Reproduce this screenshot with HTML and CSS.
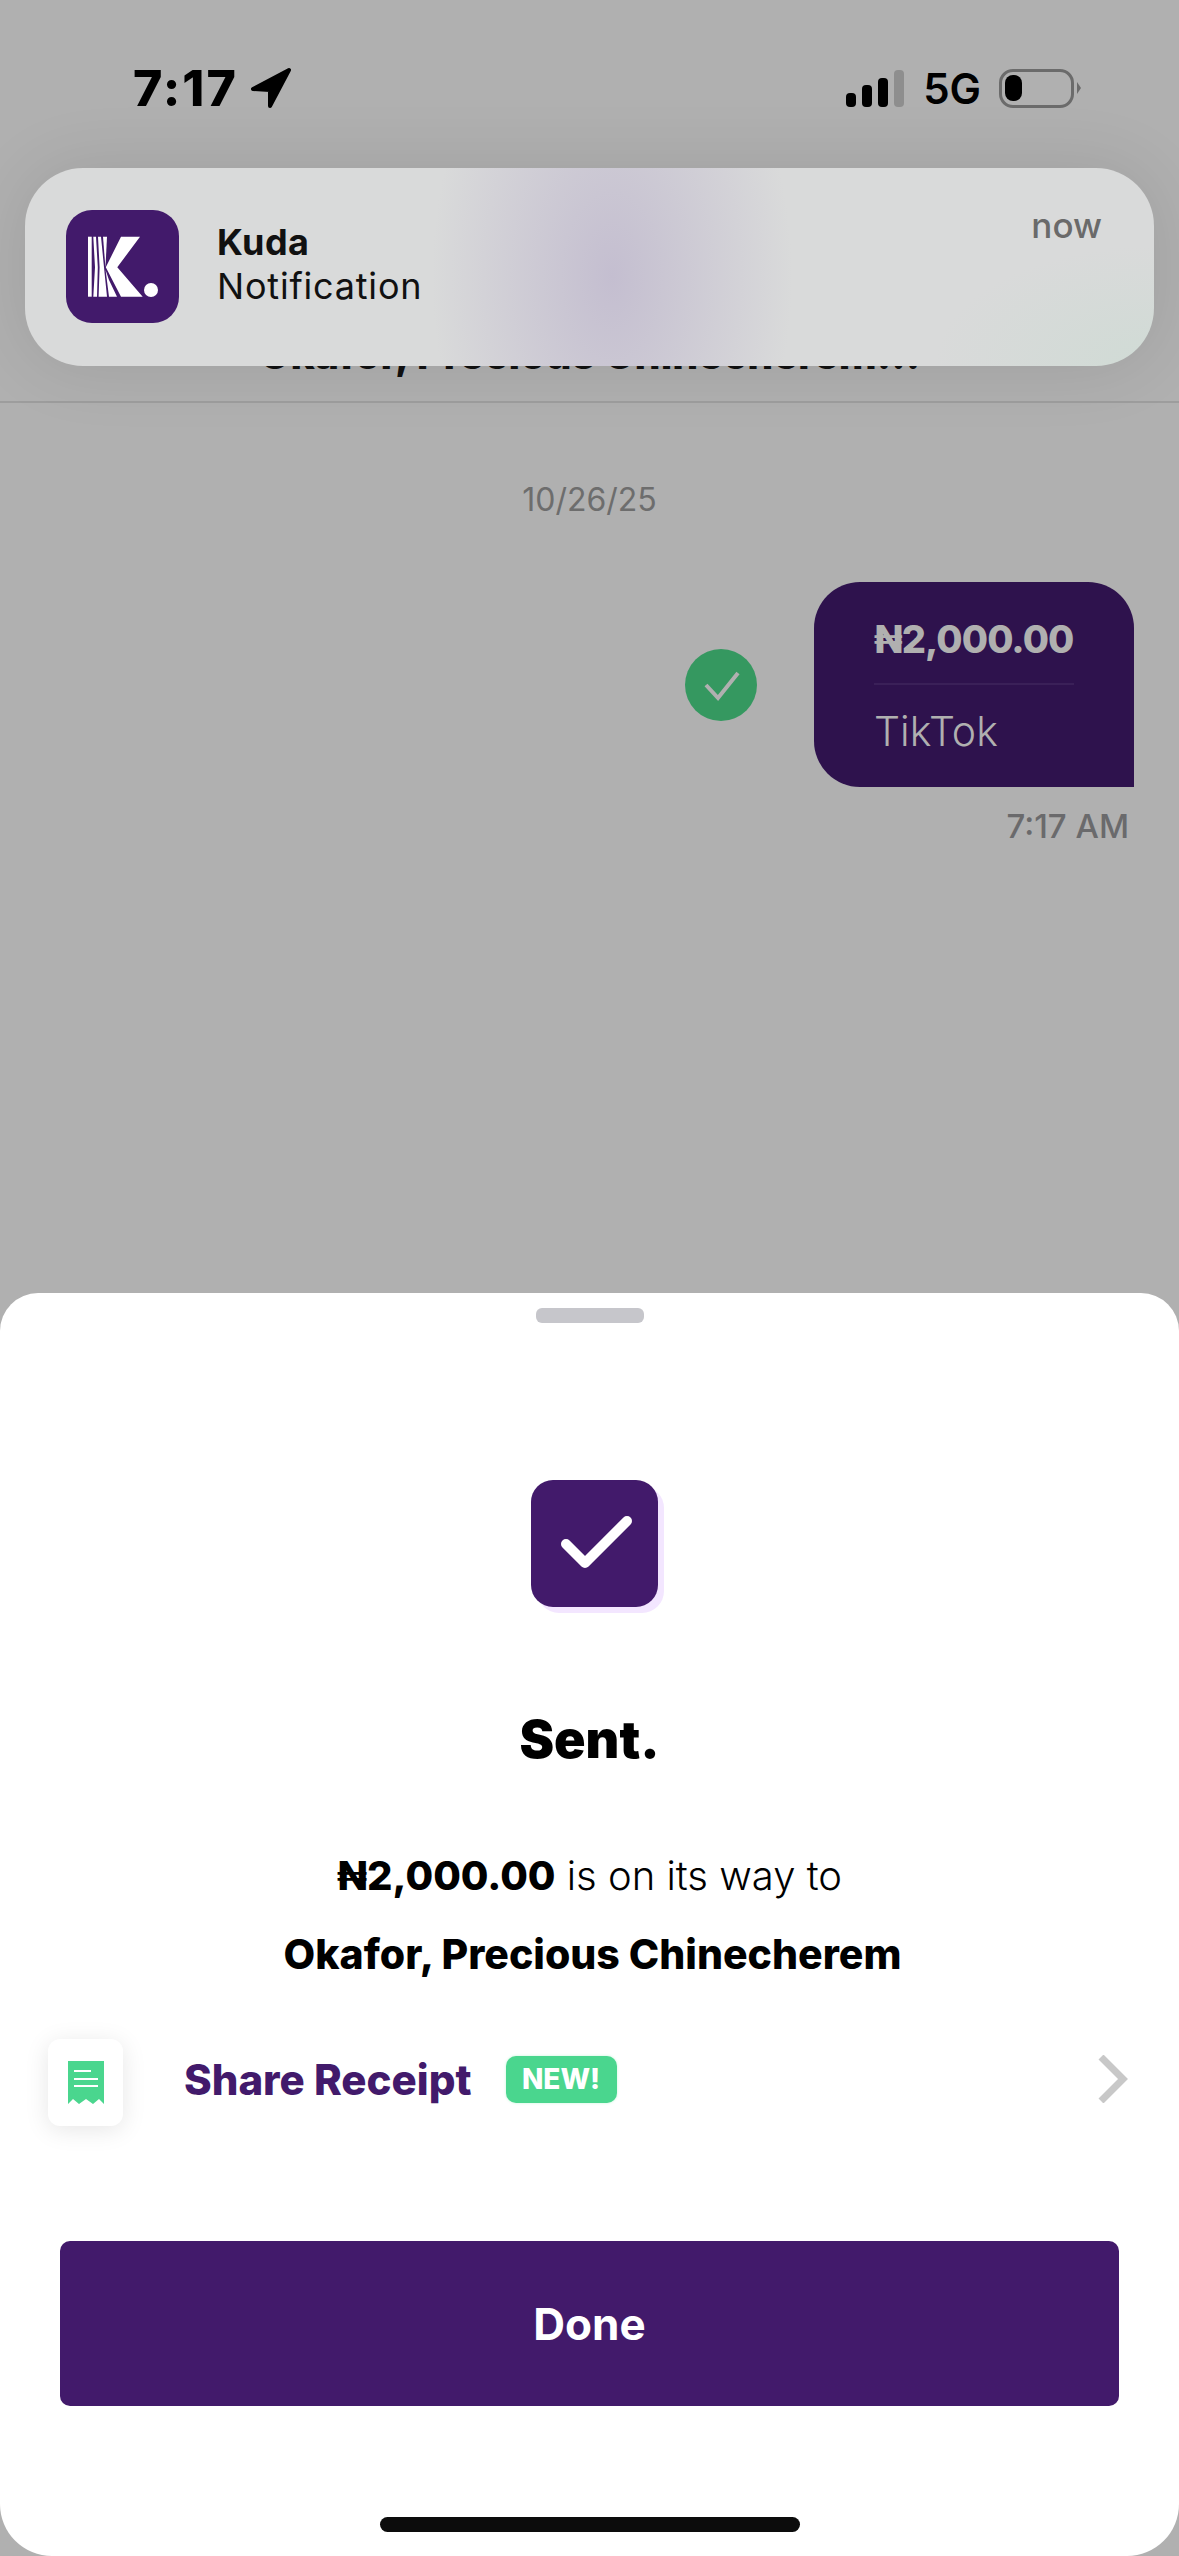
FILE: index.html
```html
<!DOCTYPE html>
<html lang="en">
<head>
  <meta charset="UTF-8" />
  <meta name="viewport" content="width=device-width, initial-scale=1.0" />
  <title>Kuda transfer sent</title>
  <link rel="stylesheet" href="styles.css">
</head>
<body>
  <div class="screen">
    <div class="top">
      <div class="status">
        <div class="status-left">
          <span class="clock">7:17</span>
          <svg class="arrow" viewBox="0 0 42 42"><path d="M39 3 L3 22 L20 23 L20 39 Z" fill="#000" stroke="#000" stroke-width="4" stroke-linejoin="round"/></svg>
        </div>
        <div class="status-right">
          <div class="bars"><i class="b1"></i><i class="b2"></i><i class="b3"></i><i class="b4"></i></div>
          <span class="net">5G</span>
          <div class="battery"><div class="level"></div></div>
          <div class="cap"></div>
        </div>
      </div>
      <div class="header">Okafor, Precious Chinecherem...</div>
      <div class="date">10/26/25</div>
      <div class="msg-row">
        <div class="tick">
          <svg viewBox="0 0 72 72" width="72" height="72"><path d="M21 36 L33 49 L53 24" fill="none" stroke="#b0b0b0" stroke-width="4"/></svg>
        </div>
        <div class="bubble">
          <div class="amount">₦2,000.00</div>
          <div class="bubble-line"></div>
          <div class="note">TikTok</div>
        </div>
      </div>
      <div class="msg-time">7:17 AM</div>
    </div>

    <div class="sheet">
      <div class="handle"></div>
      <div class="check">
        <svg viewBox="0 0 127 127" width="127" height="127"><path d="M35 64 L54 83 L96 41" fill="none" stroke="#fff" stroke-width="10" stroke-linecap="round" stroke-linejoin="round"/></svg>
      </div>
      <h1 class="sent">Sent.</h1>
      <p class="line"><b>₦2,000.00</b> is on its way to</p>
      <p class="name">Okafor, Precious Chinecherem</p>
      <div class="share">
        <div class="share-icon">
          <svg viewBox="0 0 36 43" width="36" height="43">
            <path d="M0 0 H36 V43 L31 38 L25 43 L18 38 L11 43 L5 38 L0 43 Z" fill="#4ad68e"/>
            <path d="M6 10 H23 M6 18 H30 M6 25 H30" stroke="#fff" stroke-width="2"/>
          </svg>
        </div>
        <span class="share-text">Share Receipt</span>
        <span class="new">NEW!</span>
        <svg class="chevron" viewBox="0 0 30 48" width="30" height="48"><path d="M3 2 L25 24 L3 46" fill="none" stroke="#c8c8c8" stroke-width="7"/></svg>
      </div>
      <button class="done">Done</button>
      <div class="home"></div>
    </div>

    <div class="notif">
      <div class="app-icon">
        <svg viewBox="0 0 113 113" width="113" height="113">
          <path d="M22 26.7 H25.7 V86.7 H22 Z" fill="#fff"/>
          <path d="M27.3 26.7 H30 L31.8 57.3 L31 86.7 H27.3 L29 57.3 Z" fill="#fff"/>
          <path d="M32 26.7 H35 L38 57.3 L41 86.7 H32.6 L33.6 57.3 Z" fill="#fff"/>
          <path d="M37 26.7 H41 L39.6 55 L39.4 57 Z" fill="#fff"/>
          <path d="M55 26.7 H74 L51.3 57.3 L76.7 86.7 H55 L39.8 57.3 Z" fill="#fff"/>
          <path d="M39.6 60 L43 70 L51 86.7 H43 Z" fill="#fff"/>
          <circle cx="85" cy="80" r="7" fill="#fff"/>
        </svg>
      </div>
      <div class="notif-text">
        <div class="notif-title">Kuda</div>
        <div class="notif-body">Notification</div>
      </div>
      <div class="notif-time">now</div>
    </div>
  </div>
</body>
</html>
```
FILE: styles.css
```css
html, body {
  margin: 0;
  padding: 0;
}
body {
  font-family: Inter, "Noto Sans", "DejaVu Sans", sans-serif;
  background-color: #b0b0b0;
}
.screen {
  position: relative;
  width: 1179px;
  height: 2556px;
  overflow: hidden;
  display: flex;
  flex-direction: column;
}
/* Dimmed chat behind the sheet */
.top {
  height: 1293px;
  display: flex;
  flex-direction: column;
  flex-shrink: 0;
}
.status {
  display: flex;
  justify-content: space-between;
  align-items: center;
  height: 40px;
  padding: 68px 98px 0 133px;
}
.status-left {
  display: flex;
  align-items: center;
  gap: 12px;
}
.clock {
  font-size: 50px;
  font-weight: 800;
  letter-spacing: 2px;
  color: #000;
}
.arrow {
  width: 42px;
  height: 42px;
}
.status-right {
  display: flex;
  align-items: center;
}
.bars {
  display: flex;
  align-items: flex-end;
  gap: 6px;
  height: 37px;
}
.bars i {
  display: block;
  width: 10px;
  border-radius: 4px;
  background-color: #000;
}
.bars .b1 { height: 14px; }
.bars .b2 { height: 22px; }
.bars .b3 { height: 29px; }
.bars .b4 { height: 37px; background-color: #8e8e8e; }
.net {
  margin-left: 19px;
  font-size: 42px;
  font-weight: 600;
  color: #000;
}
.battery {
  margin-left: 18px;
  width: 63px;
  height: 27px;
  padding: 3px;
  border: 3px solid #6b6b6b;
  border-radius: 14px;
}
.level {
  width: 17px;
  height: 26px;
  background-color: #000;
  border-radius: 8px;
}
.cap {
  margin-left: 3px;
  width: 0;
  height: 0;
  border-top: 6px solid transparent;
  border-bottom: 6px solid transparent;
  border-left: 4px solid #6b6b6b;
}
.header {
  margin-top: 221px;
  height: 72px;
  border-bottom: 2px solid #9d9d9d;
  text-align: center;
  font-size: 41px;
  font-weight: 800;
  line-height: 50px;
  color: #111;
}
.date {
  margin-top: 78px;
  text-align: center;
  font-size: 32px;
  font-weight: 400;
  line-height: 38px;
  color: #6d6d6d;
}
.msg-row {
  margin-top: 63px;
  display: flex;
  justify-content: flex-end;
  align-items: center;
  gap: 57px;
  padding-right: 45px;
}
.tick {
  width: 72px;
  height: 72px;
  border-radius: 50%;
  background-color: #359860;
}
.tick svg {
  display: block;
}
.bubble {
  width: 320px;
  height: 205px;
  box-sizing: border-box;
  padding: 32px 60px 0 60px;
  background-color: #2e124d;
  border-radius: 46px 46px 0 46px;
  color: #b0b0b0;
}
.amount {
  font-size: 38px;
  font-weight: 800;
  letter-spacing: -0.9px;
  line-height: 50px;
  white-space: nowrap;
}
.bubble-line {
  margin-top: 19px;
  height: 2px;
  background-color: #3a2058;
}
.note {
  margin-top: 20px;
  font-size: 41px;
  font-weight: 300;
  line-height: 52px;
}
.msg-time {
  margin-top: 20px;
  padding-right: 50px;
  text-align: right;
  font-size: 33px;
  font-weight: 500;
  line-height: 38px;
  color: #6a6a6c;
}
/* Bottom sheet */
.sheet {
  flex: 1;
  display: flex;
  flex-direction: column;
  align-items: center;
  background-color: #fff;
  border-radius: 38px 38px 52px 52px;
}
.handle {
  margin-top: 15px;
  width: 108px;
  height: 15px;
  border-radius: 6px;
  background-color: #c6c6cb;
}
.check {
  margin: 157px 0 0 10px;
  width: 127px;
  height: 127px;
  border-radius: 22px;
  background-color: #421a6b;
  box-shadow: 6px 6px 0 #f3e6ff;
}
.check svg {
  display: block;
}
.sent {
  margin: 100px 0 0 0;
  font-size: 52px;
  font-weight: 900;
  line-height: 66px;
  color: #000;
}
.line {
  margin: 78px 0 0 0;
  font-size: 40px;
  font-weight: 300;
  line-height: 50px;
  color: #000;
}
.line b {
  font-weight: 800;
}
.name {
  margin: 28px 0 0 6px;
  font-size: 41px;
  font-weight: 800;
  line-height: 50px;
  color: #000;
}
.share {
  margin-top: 60px;
  align-self: stretch;
  display: flex;
  align-items: center;
  padding: 0 51px 0 48px;
}
.share-icon {
  width: 75px;
  height: 87px;
  border-radius: 12px;
  background-color: #fff;
  box-shadow: 0 4px 24px rgba(0, 0, 0, 0.1);
  display: flex;
  align-items: center;
  justify-content: center;
}
.share-text {
  margin: 0 0 6px 61px;
  font-size: 42px;
  font-weight: 800;
  color: #421a6b;
}
.new {
  margin: 0 0 6px 34px;
  width: 111px;
  text-align: center;
  height: 47px;
  line-height: 47px;
  border-radius: 10px;
  background-color: #4ad68e;
  box-shadow: 0 0 3px #c5f5db;
  color: #fff;
  font-size: 28px;
  font-weight: 800;
}
.chevron {
  margin: 0 0 8px auto;
}
.done {
  margin-top: 115px;
  width: 1059px;
  height: 165px;
  border: 0;
  border-radius: 10px;
  background-color: #421a6b;
  color: #fff;
  font-family: Inter, sans-serif;
  font-size: 44px;
  font-weight: 700;
}
.home {
  margin-top: 111px;
  width: 420px;
  height: 15px;
  border-radius: 8px;
  background-color: #0c0c0c;
}
/* Banner sits over the chat header */
.notif {
  position: absolute;
  left: 25px;
  top: 168px;
  width: 1129px;
  height: 198px;
  box-sizing: border-box;
  padding: 42px 52px 0 41px;
  display: flex;
  border-radius: 58px;
  background:
    radial-gradient(ellipse 180px 300px at 52% 55%, rgba(196, 190, 208, 1), rgba(196, 190, 208, 0)),
    radial-gradient(ellipse 220px 120px at 100% 100%, #d0dbd5, rgba(208, 219, 213, 0)),
    #d9dada;
  box-shadow: 0 0 70px rgba(0, 0, 0, 0.1);
}
.app-icon {
  width: 113px;
  height: 113px;
  border-radius: 26px;
  background-color: #421a6b;
  flex-shrink: 0;
}
.app-icon svg {
  display: block;
}
.notif-text {
  margin-left: 38px;
  padding-top: 10px;
  flex: 1;
  color: #111;
  font-size: 36px;
  line-height: 44px;
}
.notif-title {
  font-weight: 700;
  letter-spacing: 0.4px;
}
.notif-body {
  letter-spacing: 0.8px;
}
.notif-time {
  margin-top: -7px;
  font-size: 35px;
  font-weight: 500;
  line-height: 44px;
  color: #6a6a6a;
}
```
